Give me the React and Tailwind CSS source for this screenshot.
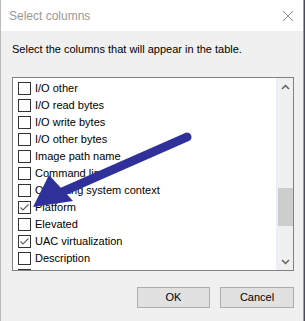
import React, { useState } from "react";

const columns = [
  { name: "I/O other", checked: false },
  { name: "I/O read bytes", checked: false },
  { name: "I/O write bytes", checked: false },
  { name: "I/O other bytes", checked: false },
  { name: "Image path name", checked: false },
  { name: "Command line", checked: false },
  { name: "Operating system context", checked: false },
  { name: "Platform", checked: true },
  { name: "Elevated", checked: false },
  { name: "UAC virtualization", checked: true },
  { name: "Description", checked: false },
  { name: "", checked: false },
];

const CheckBox = ({ checked, onClick }) => (
  <span
    onClick={onClick}
    className="w-[13px] h-[13px] border border-[#333333] bg-white flex items-center justify-center shrink-0"
  >
    {checked && (
      <svg width="11" height="11" viewBox="0 0 11 11">
        <path d="M1.5 5.5 L4 8 L9.5 2.5" fill="none" stroke="#666666" strokeWidth="1.2" />
      </svg>
    )}
  </span>
);

const App = () => {
  const [items, setItems] = useState(columns);

  const toggle = (i) => {
    setItems((prev) => prev.map((c, j) => (j === i ? { ...c, checked: !c.checked } : c)));
  };

  return (
    <div
      className="w-[305px] h-[321px] flex bg-[#f0f0f0] overflow-hidden"
      style={{ fontFamily: '"Liberation Sans", Arial, sans-serif' }}
    >
      <div className="w-px bg-[#b9b9b9]" />
      <div className="relative w-[302px] flex flex-col">
        {/* title bar */}
        <div className="h-[31px] bg-white flex items-center justify-between pl-[8px] pr-[9px]">
          <span className="text-[12px] text-[#999999]">Select columns</span>
          <svg width="12" height="12" viewBox="0 0 12 12">
            <path d="M1 1 L11 11 M11 1 L1 11" stroke="#8a8a8a" strokeWidth="1" />
          </svg>
        </div>

        {/* body */}
        <div className="flex flex-col pl-[11px]">
          <p className="mt-[10px] text-[11px] leading-[16px] text-black">
            Select the columns that will appear in the table.
          </p>

          <div className="mt-[20px] w-[282px] h-[194px] border border-[#828282] bg-white flex">
            <div className="flex-1 pt-[2px] overflow-hidden">
              {items.map((c, i) => (
                <div key={i} className="h-[17px] flex items-center pl-[5px] gap-[4px]">
                  <CheckBox checked={c.checked} onClick={() => toggle(i)} />
                  {c.name && <span className="text-[11px] text-black whitespace-nowrap">{c.name}</span>}
                </div>
              ))}
            </div>
            <div className="w-[17px] bg-[#f0f0f0] border-l border-[#e8eef7] flex flex-col items-center">
              <div className="h-[17px] flex items-center justify-center">
                <svg width="9" height="6" viewBox="0 0 9 6">
                  <path d="M1 5 L4.5 1.5 L8 5" fill="none" stroke="#606060" strokeWidth="1.5" />
                </svg>
              </div>
              <div className="mt-[93px] w-[15px] h-[38px] bg-[#cdcdcd]" />
              <div className="flex-1" />
              <div className="h-[17px] flex items-center justify-center">
                <svg width="9" height="6" viewBox="0 0 9 6">
                  <path d="M1 1 L4.5 4.5 L8 1" fill="none" stroke="#606060" strokeWidth="1.5" />
                </svg>
              </div>
            </div>
          </div>

          <div className="mt-[16px] flex gap-[10px] pl-[125px]">
            <button className="w-[73px] h-[21px] bg-[#e1e1e1] border border-[#adadad] text-[11px] text-black">
              OK
            </button>
            <button className="w-[74px] h-[21px] bg-[#e1e1e1] border border-[#adadad] text-[11px] text-black">
              Cancel
            </button>
          </div>
        </div>

        {/* annotation arrow */}
        <svg className="absolute left-[-1px] top-0 pointer-events-none" width="305" height="321" viewBox="0 0 305 321">
          <line x1="62" y1="192" x2="187" y2="137" stroke="#30309b" strokeWidth="9" strokeLinecap="round" />
          <polygon points="33,207 49,175 73,201" fill="#30309b" />
        </svg>
      </div>
      <div className="w-px bg-[#a0a0a0]" />
      <div className="w-px bg-[#4a4a5a]" />
    </div>
  );
};

export default App;
